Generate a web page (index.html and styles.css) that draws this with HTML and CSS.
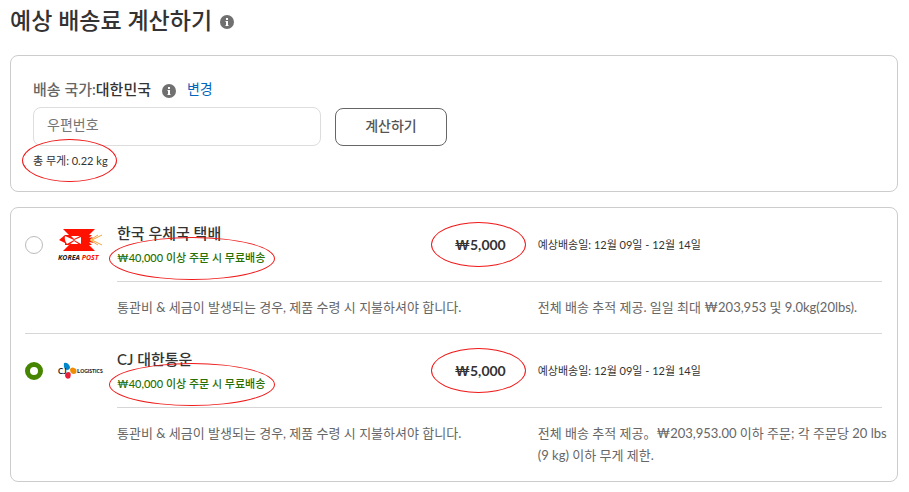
FILE: index.html
```
<!DOCTYPE html>
<html lang="ko">
<head>
  <meta charset="UTF-8">
  <meta name="viewport" content="width=device-width, initial-scale=1.0">
  <title>예상 배송료 계산하기</title>
  <link rel="stylesheet" href="styles.css">
</head>
<body>
  <!-- Shared shapes -->
  <svg class="defs" aria-hidden="true">
    <symbol id="info" viewBox="0 0 14 14">
      <circle cx="7" cy="7" r="7" fill="#707070"/>
      <path d="M6 3h2v2H6zM6 6h2v5H6z" fill="#fff"/>
      <path d="M5 6h1v1H5zM5 10h4v1H5z" fill="#fff" opacity=".5"/>
    </symbol>
  </svg>

  <main class="container">
    <h1>예상 배송료 계산하기 <svg class="info-icon"><use href="#info"/></svg></h1>

    <!-- Destination -->
    <form class="panel destination">
      <div class="country">
        <span class="country-label">배송 국가:<strong>대한민국</strong></span>
        <svg class="info-icon"><use href="#info"/></svg>
        <a href="#">변경</a>
      </div>
      <div class="zip-row">
        <input type="text" id="zip-code" placeholder="우편번호" aria-label="우편번호">
        <button type="button">계산하기</button>
      </div>
      <p class="weight"><span class="mark mark-weight">총 무게: 0.22 kg</span></p>
    </form>

    <!-- Shipping methods -->
    <div class="panel methods">
      <div class="method">
        <label class="pick" for="korea-post">
          <input type="radio" name="method" id="korea-post">
          <svg class="logo-post" viewBox="0 0 46 34" role="img" aria-label="Korea Post">
            <path d="M5 1H37L30 8H12Z" fill="#f10"/>
            <path d="M5 23L12 16H30L37 23Z" fill="#f10"/>
            <path d="M1 12L7 7H12L16 11L22 8L30 7L34 7L31 10L35 9L32 12L36 15L31 14L34 17H22L16 13L11 17H7V15Z" fill="#f10"/>
            <path d="M7 8L16 12L9 16Q6 12 7 8Z" fill="#fff"/>
            <path d="M16 12L23 9V16Z" fill="#fff"/>
            <path d="M44 7L34 12L44 17M40 7L32 12L40 17" fill="none" stroke="#f6a43a"/>
            <text x="0" y="32" class="post-text">KOREA <tspan fill="#f10">POST</tspan></text>
          </svg>
        </label>
        <div class="info">
          <div class="row head">
            <div class="summary">
              <div class="name">
                <h2>한국 우체국 택배</h2>
                <p class="free"><span class="mark mark-free">₩40,000 이상 주문 시 무료배송</span></p>
              </div>
              <strong class="price"><span class="mark mark-price">₩5,000</span></strong>
            </div>
            <p class="date">예상배송일: 12월 09일 - 12월 14일</p>
          </div>
          <div class="row details">
            <p>통관비 &amp; 세금이 발생되는 경우, 제품 수령 시 지불하셔야 합니다.</p>
            <p class="limits">전체 배송 추적 제공. 일일 최대 ₩203,953 및 9.0kg(20lbs).</p>
          </div>
        </div>
      </div>

      <div class="method">
        <label class="pick" for="cj">
          <input type="radio" name="method" id="cj" checked>
          <svg class="logo-cj" viewBox="0 0 46 18" role="img" aria-label="CJ Logistics">
            <path d="M6 1Q10 0 12 5Q12 8 9 8Q5 7 6 1z" fill="#0088cb"/>
            <path d="M12 7Q14 4 18 7Q20 12 15 12Q12 11 12 7z" fill="#f28c00"/>
            <path d="M11 10Q14 11 12 16Q8 18 7 14Q7 10 11 10z" fill="#ea1f3c"/>
            <text x="0" y="12" class="cj-text">CJ</text>
            <text x="19" y="11" class="cj-small"><tspan class="cj-cap">L</tspan>OGISTICS</text>
          </svg>
        </label>
        <div class="info">
          <div class="row head">
            <div class="summary">
              <div class="name">
                <h2>CJ 대한통운</h2>
                <p class="free"><span class="mark mark-free">₩40,000 이상 주문 시 무료배송</span></p>
              </div>
              <strong class="price"><span class="mark mark-price">₩5,000</span></strong>
            </div>
            <p class="date">예상배송일: 12월 09일 - 12월 14일</p>
          </div>
          <div class="row details">
            <p>통관비 &amp; 세금이 발생되는 경우, 제품 수령 시 지불하셔야 합니다.</p>
            <p class="limits">전체 배송 추적 제공。₩203,953.00 이하 주문; 각 주문당 20 lbs (9 kg) 이하 무게 제한.</p>
          </div>
        </div>
      </div>
    </div>
  </main>
</body>
</html>
```
FILE: styles.css
```
* { box-sizing: border-box; }
body {
  margin: 0; background: #fff; color: #333;
  font: 14px/22px Lato, "Noto Sans CJK KR", sans-serif;
}
h1, h2, p { margin: 0; }
.defs { position: absolute; width: 0; height: 0; }

.container { padding: 4px 11px 10px 10px; }
h1 { display: flex; align-items: center; gap: 8px; font-size: 23px; line-height: 32px; font-weight: 500; margin-bottom: 19px; }
.info-icon { width: 14px; height: 14px; flex: none; margin-top: 4px; }

.panel { border: 1px solid #ccc; border-radius: 8px; }

/* Destination */
.destination { padding: 22px 22px 19px; margin-bottom: 15px; }
.country { display: flex; align-items: center; gap: 11px; }
.country-label { font-size: 15px; font-weight: 500; color: #666; }
.country-label strong { font-weight: 500; color: #333; }
.country a { color: #06b; text-decoration: none; }
.zip-row { display: flex; gap: 14px; margin-top: 7px; }
#zip-code {
  width: 288px; height: 39px; padding: 0 13px 4px; border: 1px solid #ddd; border-radius: 8px;
  font: inherit; color: #333;
}
#zip-code::placeholder { color: #757575; opacity: 1; }
button {
  width: 112px; height: 38px; margin-top: 1px; padding: 0 0 2px; background: #fff; border: 1px solid #666; border-radius: 8px;
  font: inherit; font-weight: 500; color: #555; cursor: pointer;
}
.weight { margin-top: 4px; font-size: 11px; }

/* Shipping methods */
.method { display: flex; margin: 0 15px 0 14px; }
.method + .method { border-top: 1px solid #d6d6d6; }
.pick { display: flex; align-items: center; gap: 15px; width: 92px; height: 74px; flex: none; }
.pick input {
  appearance: none; width: 18px; height: 18px; margin: 0; flex: none;
  border: 1px solid #bbb; border-radius: 50%; background: #fff;
}
.pick input:checked { border: 5px solid #458500; }
.logo-post { width: 46px; height: 34px; }
.logo-cj { width: 46px; height: 18px; }
.post-text { font: italic 700 7px "Open Sans", sans-serif; fill: #222; }
.cj-text { font: 700 8px Lato, sans-serif; fill: #222; }
.cj-small { font: 900 5px Lato, sans-serif; fill: #222; }
.cj-cap { font-size: 6px; }

.info { flex: 1; min-width: 0; }
.row { display: grid; grid-template-columns: 55% 45%; }
.head { align-items: center; height: 74px; border-bottom: 1px solid #d6d6d6; }
.summary { display: flex; align-items: center; justify-content: space-between; padding-right: 32px; }
.name { padding-top: 3px; }
h2 { font-size: 15px; line-height: 24px; font-weight: 500; }
.free { font-size: 11px; line-height: 26px; font-weight: 500; color: #276f00; }
.price { font-size: 14px; font-weight: 700; }
.date { font-size: 11px; }
.details { padding: 14px 0 15px; font-size: 13px; color: #666; }
.limits { margin-right: -10px; }

/* Red rings round the key figures */
.mark { position: relative; }
.mark::after { content: ""; position: absolute; border: 1px solid #f01818; border-radius: 50%; }
.mark-weight::after { inset: -15px -9px -15px -11px; }
.mark-free::after { inset: -14px -10px -16px -8px; }
.mark-price::after { inset: -14px -20px -14px -24px; }
```
